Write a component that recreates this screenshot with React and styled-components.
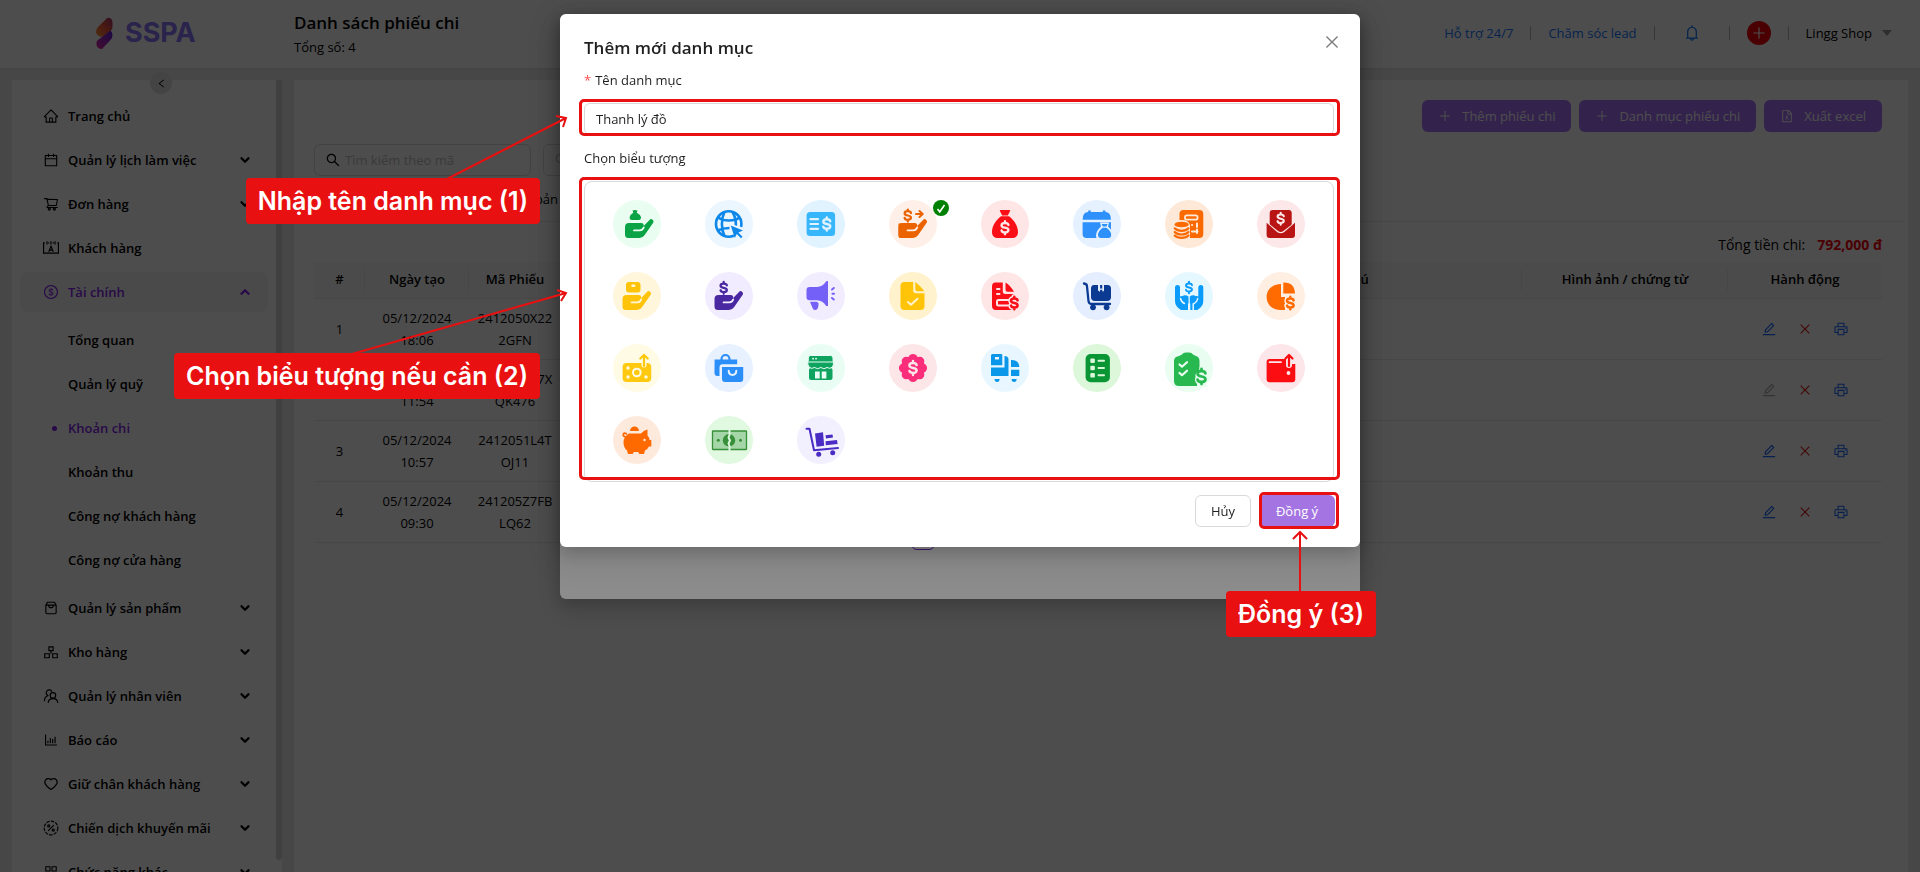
import { useState } from "react";
import styled, { createGlobalStyle } from "styled-components";
import {
  AiOutlineHome,
  AiOutlineCalendar,
  AiOutlineShoppingCart,
  AiOutlineDollar,
  AiOutlineBarChart,
  AiOutlineHeart,
  AiOutlineAppstore,
  AiOutlineBell,
  AiOutlinePlus,
  AiOutlineFileExcel,
  AiOutlineEdit,
  AiOutlineClose,
  AiOutlinePrinter,
  AiOutlineLeft,
  AiOutlineSearch,
} from "react-icons/ai";
import { FiChevronDown, FiChevronUp } from "react-icons/fi";

const GlobalStyle = createGlobalStyle`
  * { box-sizing: border-box; }
  body {
    margin: 0;
    overflow: hidden;
    background: #ebebeb;
    color: #000;
    font: 13px/22px "Open Sans", "Noto Sans", sans-serif;
  }
  button, input { font: inherit; color: inherit; }
  a { text-decoration: none; }
`;

const Page = styled.div`
  height: 100vh;
  overflow: hidden;
  display: flex;
  flex-direction: column;
`;

/* ---------- header ---------- */

const Header = styled.header`
  flex: none;
  height: 68px;
  display: flex;
  align-items: center;
  background: #fff;
  box-shadow: 0 1px 2px rgba(0, 0, 0, 0.05);
  padding: 0 28px 2px 0;
`;

const Brand = styled.div`
  width: 294px;
  padding: 0 4px 0 94px;
  display: flex;
  align-items: center;
  gap: 10px;
  color: #8b74fb;
  font: 700 27px/32px Inter, "Liberation Sans", sans-serif;
`;

const Heading = styled.div`
  flex: 1;
  margin-top: 2px;

  h1 {
    margin: 0;
    font-size: 17px;
    font-weight: 600;
    line-height: 26px;
  }
`;

const TopLinks = styled.nav`
  display: flex;
  align-items: center;

  a { color: #1677ff; }
`;

const Divider = styled.span`
  width: 1px;
  height: 14px;
  margin: 0 17px;
  background: #bbb;
`;

const IconButton = styled.button`
  display: inline-flex;
  align-items: center;
  justify-content: center;
  width: ${(props) => props.$size || 16}px;
  height: ${(props) => props.$size || 16}px;
  padding: 0;
  border: 0;
  background: ${(props) => props.$bg || "none"};
  border-radius: ${(props) => (props.$bg ? "50%" : 0)};
  color: ${(props) => props.$color || "inherit"};
  margin: 0 ${(props) => props.$gap || 0}px;
`;

const Account = styled.button`
  display: flex;
  align-items: center;
  gap: 10px;
  padding: 0;
  border: 0;
  background: none;
`;

const Caret = styled.span`
  border: 5px solid transparent;
  border-top: 6px solid #999;
  border-bottom: 0;
`;

/* ---------- sidebar ---------- */

const Body = styled.div`
  flex: 1;
  min-height: 0;
  display: flex;
  padding: 12px 12px 0;
`;

const Sidebar = styled.aside`
  position: relative;
  flex: none;
  display: flex;
  width: 270px;
  margin-right: 12px;
  background: #fff;
`;

const Collapse = styled.button`
  position: absolute;
  top: -8px;
  left: 138px;
  width: 22px;
  height: 22px;
  display: flex;
  align-items: center;
  justify-content: center;
  padding: 0;
  border: 0;
  border-radius: 50%;
  background: #e0e0e0;
`;

const Menu = styled.ul`
  flex: 1;
  list-style: none;
  margin: 0;
  padding: 16px 8px 0;
  display: flex;
  flex-direction: column;
  gap: ${(props) => props.$gap || 4}px;

  ul {
    padding: 8px 0 4px;
    flex: none;
  }
`;

const MenuItem = styled.button`
  width: 100%;
  height: 40px;
  display: flex;
  align-items: center;
  gap: 9px;
  padding: 0 16px 0 23px;
  border: 0;
  border-radius: 6px;
  background: ${(props) => (props.$open ? "#f5f5f5" : "none")};
  color: ${(props) => (props.$open ? "#851fee" : "#000")};
  font-weight: 600;
  text-align: left;
  white-space: nowrap;

  svg { flex: none; }
`;

const MenuLabel = styled.span`
  flex: 1;
`;

const SubItem = styled.a`
  display: flex;
  align-items: center;
  height: 40px;
  padding-left: 32px;
  gap: 11px;
  font-weight: 600;
  color: ${(props) => (props.$active ? "#851fee" : "#000")};

  &::before {
    content: "";
    width: 5px;
    height: 5px;
    border-radius: 50%;
    background: ${(props) => (props.$active ? "#851fee" : "none")};
  }
`;

const ScrollThumb = styled.div`
  flex: none;
  width: 6px;
  margin-bottom: 12px;
  border-radius: 0 0 3px 3px;
  background: #d4d4d4;
`;

/* ---------- content ---------- */

const Content = styled.main`
  flex: 1;
  min-width: 0;
  background: #fff;
  padding: 20px 26px 0 20px;
`;

const Actions = styled.div`
  display: flex;
  justify-content: flex-end;
  gap: 8px;
`;

const Primary = styled.button`
  height: 32px;
  display: flex;
  align-items: center;
  gap: 10px;
  padding: 0 16px;
  border: 0;
  border-radius: 6px;
  background: #a873fa;
  color: #fff;
`;

const Filters = styled.div`
  display: flex;
  gap: 12px;
  margin-top: 12px;
`;

const SearchBox = styled.label`
  display: flex;
  align-items: center;
  gap: 4px;
  width: 217px;
  height: 32px;
  padding: 0 10px;
  border: 1px solid #d9d9d9;
  border-radius: 6px;

  input {
    flex: 1;
    min-width: 0;
    border: 0;
    padding: 0;
    background: none;
    outline: none;
  }
  input::placeholder { color: #bfbfbf; }
`;

const Tabs = styled.div`
  display: flex;
  gap: 24px;
  height: 46px;
  align-items: center;
  margin: 0 -22px 0 0;
  border-bottom: 1px solid #eaeaea;

  button {
    padding: 0;
    border: 0;
    background: none;
    width: 110px;
    text-align: right;
  }
`;

const Total = styled.p`
  display: flex;
  justify-content: flex-end;
  gap: 12px;
  margin: 12px 0 6px;
  font-size: 14px;

  b { color: #f5000a; }
`;

const Table = styled.table`
  width: 100%;
  table-layout: fixed;
  border-collapse: separate;
  border-spacing: 0;
  text-align: center;

  th {
    position: relative;
    height: 37px;
    padding: 0 0 2px;
    background: #f7f7f7;
    border-bottom: 1px solid #eaeaea;
    font-weight: 600;
  }
  th:not(:last-child)::after {
    content: "";
    position: absolute;
    right: 0;
    top: 7px;
    width: 1px;
    height: 22px;
    background: #eaeaea;
  }
  td {
    height: 61px;
    padding: 8px;
    border-bottom: 1px solid #eaeaea;
    overflow-wrap: anywhere;
  }
`;

const RowActions = styled.div`
  display: flex;
  justify-content: center;
  gap: 20px;
`;

/* ---------- dialogs ---------- */

const Mask = styled.div`
  position: fixed;
  inset: 0;
  overflow: hidden;
  background: rgba(0, 0, 0, 0.45);
`;

const Dialog = styled.section`
  position: relative;
  width: 800px;
  margin: 14px auto 0;
  padding: 20px 24px;
  border-radius: 6px;
  background: #fff;
  color: #1f1f1f;
  box-shadow: 0 6px 16px rgba(0, 0, 0, 0.16), 0 9px 28px 8px rgba(0, 0, 0, 0.1);

  h2 {
    margin: 0 0 7px;
    font-size: 17px;
    line-height: 28px;
    font-weight: 600;
  }
`;

const ListDialog = styled(Dialog)`
  min-height: 585px;
  display: flex;
  flex-direction: column;
  align-items: center;
  justify-content: flex-end;
  padding-bottom: 49px;
`;

const Pager = styled.nav`
  padding-right: 74px;
`;

const PageNumber = styled.button`
  display: block;
  width: 24px;
  height: 24px;
  padding: 0;
  border: 1px solid #722ed1;
  border-radius: 6px;
  background: #fff;
`;

const Close = styled.button`
  position: absolute;
  top: 17px;
  right: 17px;
  width: 22px;
  height: 22px;
  padding: 2px;
  border: 0;
  background: none;
  color: #808080;

  svg { display: block; }
`;

const Label = styled.label`
  display: block;
  margin-bottom: 12px;

  i {
    color: #ff4d4f;
    font-style: normal;
    margin-right: 4px;
  }
`;

/* red frame drawn over the control it surrounds */
const Marked = styled.div`
  position: relative;

  &::after {
    content: "";
    position: absolute;
    inset: ${(props) => props.$inset};
    border: 3px solid #e81010;
    border-radius: 5px;
    pointer-events: none;
  }
`;

const NameInput = styled.input`
  display: block;
  width: 750px;
  height: 32px;
  margin-bottom: 12px;
  padding: 0 11px;
  border: 1px solid #d9d9d9;
  border-radius: 6px;
  outline: none;
`;

const IconGrid = styled.div`
  width: 750px;
  display: grid;
  grid-template-columns: repeat(8, 1fr);
  grid-auto-rows: 72px;
  padding: 6px 6px 5px;
  border: 1px solid #d9d9d9;
  border-radius: 8px;
`;

const IconCell = styled.button`
  position: relative;
  padding: 0;
  border: 0;
  background: none;
  display: flex;
  align-items: center;
  justify-content: center;
`;

const Tick = styled.svg`
  position: absolute;
  top: 12px;
  right: 10px;
`;

const Footer = styled.footer`
  display: flex;
  justify-content: flex-end;
  gap: 8px;
  margin-top: 13px;
  padding-right: 1px;
`;

const Cancel = styled.button`
  width: 56px;
  height: 32px;
  padding: 0;
  border: 1px solid #d9d9d9;
  border-radius: 6px;
  background: #fff;
`;

const Confirm = styled(Primary)`
  width: 76px;
  justify-content: center;
  padding: 0;
  background: #a475e2;
`;

const Arrows = styled.svg`
  position: absolute;
  top: 0;
  left: 0;
  overflow: visible;
  pointer-events: none;
`;

const Callout = styled.div`
  position: absolute;
  top: ${(props) => props.$top}px;
  right: ${(props) => props.$right}px;
  padding: 7px 12px;
  border-radius: 4px;
  background: #e81010;
  color: #fff;
  font: 600 25px/32px Inter, "Open Sans", sans-serif;
  white-space: nowrap;
`;

/* ---------- drawings ---------- */

const Line = ({ children, size = 14, sw = 1.2 }) => (
  <svg width={size} height={size} viewBox="0 0 14 14" fill="none" stroke="currentColor" strokeWidth={sw}>
    {children}
  </svg>
);

const CustomerIcon = ({ size }) => (
  <Line size={size} sw={1}>
    <path d="M1.500 2.500h-1v9h13v-9h-1M3.500 1v3M7 1v3M10.500 1v3M4.500 2.500h1M8.500 2.500h1M5 10.200l2-4.700 2 4.700M5.600 8.800h2.800" />
  </Line>
);

const ProductIcon = ({ size }) => (
  <Line size={size} sw={1}>
    <path d="M2.500 4.500 4 2h6l1.500 2.500v6.500a1 1 0 0 1-1 1h-7a1 1 0 0 1-1-1zM2.500 4.500h9M5 4.500c0 3 4 3 4 0" />
  </Line>
);

const StockIcon = ({ size }) => (
  <Line size={size} sw={1}>
    <path d="M5.200 2.500h3.600v3.300H5.200zM1.500 8.500h4V12h-4zM8.500 8.500h4V12h-4zM7 6v2.500" />
  </Line>
);

const StaffIcon = ({ size }) => (
  <Line size={size} sw={1}>
    <circle cx="8.700" cy="6.500" r="2.400" />
    <path d="M4.500 13c.3-5 8.200-5 8.500 0M7.800 3.200A2.600 2.600 0 1 0 4.200 6.500C2.200 7.500 1.200 9 1.200 11.500" />
  </Line>
);

const PromoIcon = ({ size }) => (
  <Line size={size} sw={1}>
    <circle cx="7" cy="7" r="6" strokeDasharray="3 1" />
    <path d="m4.500 9.500 5-5" />
    <circle cx="5" cy="5.200" r=".9" />
    <circle cx="9" cy="8.800" r=".9" />
  </Line>
);

const Logo = () => (
  <svg width="21" height="34" viewBox="0 0 21 34">
    <defs>
      <linearGradient id="flame" x1="0" y1="1" x2="1" y2="0">
        <stop offset="0" stopColor="#ff9a2e" />
        <stop offset=".5" stopColor="#f5553c" />
        <stop offset="1" stopColor="#a03070" />
      </linearGradient>
      <linearGradient id="violet" x1="0" y1="1" x2="1" y2="0">
        <stop offset="0" stopColor="#e02aa0" />
        <stop offset="1" stopColor="#5a1ee0" />
      </linearGradient>
    </defs>
    <path d="M4 11 13.500 1.700q4.500-.2 5 4.300v5q0 2-1.500 3.500L8 21q-5.500-1-6-5 0-3 2-5z" fill="url(#flame)" />
    <path d="m8 21 8.500-6.500q2 1.500 2 4.500t-2 5L8 33q-4.500-.2-5.500-4-.5-4 1.500-5z" fill="url(#violet)" />
  </svg>
);

const Dollar = ({ x, y, s = 1, w = 2, c }) => (
  <path
    transform={`translate(${x} ${y}) scale(${s})`}
    fill="none"
    stroke={c}
    strokeWidth={w}
    strokeLinecap="round"
    d="M3.300-2.600C3-4 1.700-4.500 0-4.500c-2 0-3.300.9-3.300 2.300C-3.300-.7-1.700-.3 0 0s3.300.7 3.300 2.200C3.300 3.600 2 4.500 0 4.500c-1.700 0-3-.5-3.300-1.900M0-6.300v1.800M0 4.500v1.800"
  />
);

const Hand = ({ c, bg, x = 0 }) => (
  <g transform={`translate(${x} 0)`}>
    <path
      fill={c}
      d="M9.500 27a4 4 0 0 1 4-4h12a2.700 2.700 0 0 1 2.700 3l5.800-6a2.300 2.300 0 0 1 3.700 2.700L29 35.300A6 6 0 0 1 24 38H13a3.500 3.500 0 0 1-3.500-3.500z"
    />
    <path d="M18.500 30.400h5.800c2 0 3.200-1 4-3" fill="none" stroke={bg} strokeWidth="1.700" strokeLinecap="round" />
  </g>
);

const cut = (bg, w = 1.8) => ({ fill: "none", stroke: bg, strokeWidth: w, strokeLinecap: "round", strokeLinejoin: "round" });

// every entry: circle colour, drawing colour, drawing on a 48x48 board
const categoryIcons = [
  ["Trả tiền", "#e9fdf0", "#0aa345", (c, bg) => (
    <>
      <path fill={c} d="M19.500 10.500q2.500-1.200 5 0l-.8 2.300q4.300 2.200 4.300 5 0 2.200-2.200 2.200h-7q-2.200 0-2.200-2.200 0-2.800 3.700-5z" />
      <Hand c={c} bg={bg} x={2.500} />
    </>
  )],
  ["Trực tuyến", "#ebf6ff", "#0d87e9", (c, bg) => (
    <>
      <g fill="none" stroke={c} strokeWidth="2.600">
        <circle cx="23.700" cy="24" r="12.700" />
        <path d="M19.500 12c-3.500 7-3.500 17 0 24M27.500 12c3 5 3.600 9 3.400 14M13 17.500c4 2.500 6.500 3 11 3s7.500-.5 10.500-3M12.500 30.500c4-2 7-2.500 12-2.500" />
      </g>
      <path d="M23.500 23.500 40 28v12h-9z" fill={bg} />
      <path d="m25.700 25.500 12.300 5-4.600 2 4.100 4.200-1.500 1.500-4.200-4.200-2 4z" fill={c} />
    </>
  )],
  ["Thẻ", "#e0f3ff", "#38b6fb", (c, bg) => (
    <>
      <rect x="9.600" y="12" width="28.500" height="24" rx="3.500" fill={c} />
      <path d="M13.500 19.200h7.500M13.500 24h7.500M13.500 28.800h7.500" {...cut(bg, 2.200)} />
      <Dollar x={29.800} y={24} s={1.050} w={2.300} c={bg} />
    </>
  )],
  ["Chi tiền", "#fef0e8", "#eb6200", (c, bg) => (
    <>
      <Dollar x={18.800} y={15.500} s={0.950} w={2.400} c={c} />
      <path d="M27 14h6M30.500 11l3.200 3-3.200 3" {...cut(c, 2)} />
      <path fill={c} d="M9.500 23.500h14V38h-12q-2 0-2-2z" />
      <Hand c={c} bg={bg} />
    </>
  )],
  ["Túi tiền", "#fee6e7", "#fb0f16", (c, bg) => (
    <>
      <path fill={c} d="M19.500 10h9q1 0 .6 1l-2.300 4.500h-5.600L18.900 11q-.4-1 .6-1zM20 16.300h8c5 3.700 9 9.500 9 15.700 0 4-2.500 6-6 6H17c-3.500 0-6-2-6-6 0-6.200 4-12 9-15.700z" />
      <Dollar x={24} y={27.700} s={1.050} w={2.200} c={bg} />
    </>
  )],
  ["Lịch chi", "#e6f1ff", "#2e90fa", (c, bg) => (
    <>
      <path fill={c} d="M9.600 19.800q0-7.500 5.600-7.800V10.600h2.600V12h12V10.600h2.600V12q5.600.3 5.600 7.800zM9.600 22.200H38V38H13.500q-3.900 0-3.900-4z" />
      <path d="M27 22.500h9l-1 4q5 4.500 5 9 0 4.500-4 4.500h-9q-4 0-4-4.500t5-9z" fill={bg} />
      <path d="M28.600 24h6l-1.200 2.500h-3.600zM29.700 27.700h3.800q4.700 3.600 4.700 7 0 3.300-3 3.300H28q-3 0-3-3.300 0-3.400 4.700-7z" fill={c} />
    </>
  )],
  ["Kế toán", "#fee9d9", "#fb6a00", (c, bg) => (
    <>
      <rect x="14.500" y="10" width="23.800" height="28" rx="4" fill={c} />
      <rect x="20" y="15.300" width="12.500" height="4.400" rx="1.800" {...cut(bg)} />
      <path d="M27 25h.1M32 23.500v3.500M27 31.500h5.500M32 29.500v3.500" {...cut(bg, 2)} />
      <path d="M8 25q1.500-5 8.500-5t8.500 5v15H8z" fill={bg} />
      <ellipse cx="16.600" cy="24.500" rx="7.200" ry="2.800" fill={c} />
      <path d="M9.700 28.300q2.300 2.500 6.900 2.500t6.900-2.500M9.700 32q2.300 2.500 6.900 2.500t6.900-2.500M9.700 35.500q2.300 2.300 6.900 2.300t6.900-2.300" {...cut(c, 2.200)} />
    </>
  )],
  ["Thư", "#fde8e9", "#b81414", (c, bg) => (
    <>
      <path fill={c} d="M12.700 13q0-3 3-3h16q3 0 3 3v13l-11 8-11-8z" />
      <path d="M8 20.500 21 31q2.700 1.800 5.400 0L40 20.500V25L26 35h-5L8 25z" fill={bg} />
      <path fill={c} d="m9.600 22.800 10.800 9.400q3.300 2.200 6.600 0L38 22.800V35q0 3-3 3H12.600q-3 0-3-3z" />
      <Dollar x={23.700} y={18.700} s={0.950} w={2.200} c={bg} />
    </>
  )],
  ["Nhận tiền mặt", "#fff6db", "#ffc40a", (c, bg) => (
    <>
      <rect x="13" y="10" width="14.500" height="10.500" rx="3" fill={c} />
      <rect x="18.300" y="12.500" width="4" height="2.500" rx="1" fill={bg} />
      <Hand c={c} bg={bg} />
    </>
  )],
  ["Cho vay", "#f1ecff", "#4a28a2", (c, bg) => (
    <>
      <Dollar x={18.700} y={15.800} s={0.950} w={2.400} c={c} />
      <Hand c={c} bg={bg} />
    </>
  )],
  ["Quảng cáo", "#f1edff", "#7560f7", (c) => (
    <>
      <path fill={c} d="M12.500 15h7.500q6-.6 8.600-5 .8-1.200 2.400-.8V34q-1.800.4-2.400-.8-2.600-4.500-8.600-5h-7.500q-3 0-3-3V18q0-3 3-3zM13 29.800h6.500q2.500.5 2 3-.2 5.200-3.500 5.200-2 0-2.700-2.500z" />
      <path d="m35 17.500 1.800-1.500M35.500 21.700h1.500M35 26l1.800 1.500" {...cut(c, 2)} />
    </>
  )],
  ["Chứng từ", "#fff2cc", "#ffc408", (c, bg) => (
    <>
      <path fill={c} d="M15.500 10h8.700v8.500q0 2.800 2.800 2.800h8.500V34q0 4-4 4h-16q-4 0-4-4V14q0-4 4-4zM26.300 10q3.500 2.500 9.200 9.200h-7.200q-2 0-2-2z" />
      <path d="m19 30 3 2.700 6.500-6" {...cut(bg, 2)} />
    </>
  )],
  ["Hóa đơn", "#fee6e7", "#fb0f16", (c, bg) => (
    <>
      <path fill={c} d="M14.500 10.500h7.300v9q0 2.500 2.500 2.500H33v16H15q-4 0-4-4V14.500q0-4 3.500-4zM24.500 10.500Q29 13 33 19.800h-6.500q-2 0-2-2z" />
      <path d="M16 17h2.500M16 22h2.500" {...cut(bg, 2)} />
      <path d="M28 28H17.500q-1.500 0-1.500 1.800V32q0 1.500 1.500 1.500H27" {...cut(bg, 2)} />
      <Dollar x={33.300} y={31} s={1} w={5.500} c={bg} />
      <Dollar x={33.300} y={31} s={1} w={2.500} c={c} />
    </>
  )],
  ["Xe hàng", "#e4eeff", "#0b3a93", (c, bg) => (
    <>
      <path d="M11 11.500q3 .3 3 3l1.500 14.500q.3 3 3 3H37" {...cut(c, 2.300)} />
      <path fill={c} d="M21 13h4v6l3-1.500 3 1.500v-6h3.500q3.500 0 3.500 3.500V25q0 4-4 4H22q-4 0-4-4v-8.500q0-3.500 3-3.500z" />
      <path fill={c} d="M26.500 13h3v4l-1.500-.8-1.500.8z" />
      <circle cx="20" cy="35.300" r="2.900" fill={c} />
      <circle cx="33.600" cy="35.300" r="2.900" fill={c} />
      <path d="M26.500 13v6M30 13v6" {...cut(bg, 1.200)} />
    </>
  )],
  ["Hỗ trợ", "#e6f8ff", "#0a9bfc", (c, bg) => (
    <>
      <Dollar x={24} y={15.500} s={0.900} w={2.200} c={c} />
      <path fill={c} d="M10 15.500a2.500 2.500 0 0 1 5 0v9q2.500-1.500 5 1l3 3.500V38H16q-6-3.500-6-9zM38.300 15.500a2.500 2.500 0 0 0-5 0v9q-2.500-1.500-5 1L25.300 29v9h7q6-3.500 6-9z" />
      <path fill={c} d="M17 24.500q3-2.500 6.500 0v7h-4zM31.200 24.500q-3-2.500-6.400 0v7h4z" />
      <path d="M15.500 26.500q1 3.800 4 5M32.700 26.500q-.5 3.500-4.500 5.500V38" {...cut(bg, 1.500)} />
    </>
  )],
  ["Cổ phần", "#ffefe3", "#ff6b00", (c, bg) => (
    <>
      <path fill={c} d="M24 12v13h4v13h-5c-8 0-13.400-6-13.400-13S15 12 24 12zM26.300 10.500Q37.500 10 38 21.500H26.300z" />
      <Dollar x={33.300} y={31} s={1} w={5.500} c={bg} />
      <Dollar x={33.300} y={31} s={1} w={2.500} c={c} />
    </>
  )],
  ["Rút tiền", "#fffbe5", "#ffc90f", (c, bg) => (
    <>
      <rect x="9.600" y="19" width="28.600" height="19" rx="4" fill={c} />
      <circle cx="23.800" cy="28.500" r="3.800" {...cut(bg, 2)} />
      <g fill={bg}>
        <circle cx="15" cy="24" r="1.700" />
        <circle cx="15" cy="33" r="1.700" />
        <circle cx="33" cy="33" r="1.700" />
      </g>
      <path d="M31 12v9" {...cut(bg, 5)} />
      <path d="M31 11.500V22M27.300 14.500 31 11l3.700 3.500" {...cut(c, 2.300)} />
    </>
  )],
  ["Mua sắm", "#e7f1ff", "#2c8ef8", (c, bg) => (
    <>
      <path d="M16.500 16v-1a4 4 0 0 1 8 0v1" {...cut(c, 2.200)} />
      <path fill={c} d="M9.600 15.500h22.600v4.700H17.500q-3 0-3 3V32h-2q-3 0-3-3z" />
      <path fill={c} d="M17 23h21.200v12q0 3-3 3H20q-3 0-3-3z" />
      <path d="M23.700 26.800c0 5.500 7.600 5.500 7.600 0" {...cut(bg, 2)} />
    </>
  )],
  ["Cửa hàng", "#e9fdf5", "#0fa360", (c, bg) => (
    <>
      <rect x="12" y="24" width="23.500" height="12" rx="2" fill={c} />
      <path fill={c} stroke={bg} strokeWidth="1" d="M13.500 11.500h20q2.500 0 2.500 2.500v2.500q1.300 4-.5 6.500-2.500 2.500-5.500.5-3 2.500-6.200 0-3.300 2.500-6.300 0-3 2-5.500-.5-2-2.500-.7-6.500V14q0-2.500 2.200-2.500z" />
      <path d="M12 18h23.500" {...cut(bg, 1)} />
      <path d="M16 14.700h.1M19 14.700h.1" {...cut(bg, 1.700)} />
      <path d="M18 27.500h4.700V34.500H18zM24.700 27.500h4.700V34.500h-4.700z" fill={bg} />
    </>
  )],
  ["Khuyến mãi", "#fde6e8", "#fb2e7c", (c, bg) => (
    <>
      <circle cx="24" cy="24" r="12" fill={c} />
      {[0, 45, 90, 135, 180, 225, 270, 315].map((a) => (
        <circle key={a} cx="24" cy="14.500" r="4.600" fill={c} transform={`rotate(${a} 24 24)`} />
      ))}
      <Dollar x={24} y={24} s={1.100} w={2.200} c={bg} />
    </>
  )],
  ["Vận chuyển", "#e8f7ff", "#0a97ea", (c, bg) => (
    <>
      <path fill={c} d="M11.500 10H20q1.300 0 1.300 1.300v10H10V11.500Q10 10 11.500 10zM10 23.600h13.500V12q4 0 4 3.500V32H10zM30 16q8-.5 8.300 7H30zM30 25.800h8.300V32H30zM13.500 35h5.200q-.2 3-2.600 3t-2.600-3zM30.500 35h5.200q-.2 3-2.600 3t-2.600-3z" />
      <rect x="14" y="13" width="4" height="2.500" fill={bg} />
    </>
  )],
  ["Danh sách", "#dcf7d9", "#0a9635", (c, bg) => (
    <>
      <rect x="12.600" y="10" width="24.300" height="28.300" rx="5" fill={c} />
      {[16.700, 24, 31.300].map((y) => (
        <g key={y}>
          <rect x="17.300" y={y - 2.300} width="4.600" height="4.600" rx="1.200" fill={bg} />
          <path d={`M25.500 ${y}h5.500`} {...cut(bg, 2)} />
        </g>
      ))}
    </>
  )],
  ["Kiểm kê", "#e9fdf0", "#27b850", (c, bg) => (
    <>
      <path fill={c} d="M17 10.500q1-2 4-2h3q3 0 4 2l3 1.500q3.500 1 3.500 5V42H14q-5 0-5-5V17q0-4 4.500-4.700z" />
      <path d="m14.500 20.500 2.500 2.200 5-4.500M14.500 29l2.500 2.200 5-4.500" {...cut(bg, 2.200)} />
      <path d="M34.500 23v4q-5 1.500-4 6-1.500 4 1.500 7v3h10V23z" fill={bg} />
      <Dollar x={36.500} y={32.500} s={1.200} w={2.300} c={c} />
    </>
  )],
  ["Ví", "#fde6ea", "#fb0d12", (c, bg) => (
    <>
      <path fill={c} d="M12.500 15H29v5h9.300v15.300q0 3-3 3H12.600q-3 0-3-3V18q0-3 2.900-3z" />
      <path d="M12.500 18.200H24" {...cut(bg, 1.700)} />
      <circle cx="31.500" cy="29" r="1.900" fill={bg} />
      <path d="M32 14v7" {...cut(bg, 6)} />
      <path d="M32 11.500V22M28.500 14.500 32 11l3.500 3.500" {...cut(c, 2.200)} />
    </>
  )],
  ["Tiết kiệm", "#fee9dd", "#ff6a00", (c, bg) => (
    <>
      <path fill={c} d="M17 15a4.500 4.500 0 0 1 9 0zM16 17.500h12q3-3.500 6.500-4v6q2 2 2 4.500h1.800v6.500H36q-1.500 3-4 4L31 38h-4.500L25 36h-4l-1.500 2H15l-1-3.500q-3.500-3-3.500-8 0-6 5.500-9z" />
      <path d="M13 21q-3.500-.5-2.500-3 1-1.500 2.800-.3" {...cut(c, 1.900)} />
      <circle cx="31.500" cy="24" r="1.200" fill={bg} />
    </>
  )],
  ["Tiền mặt", "#e1f8e1", "#379039", (c, bg) => (
    <>
      <rect x="7.500" y="15" width="34" height="18.500" rx=".5" fill="#a5d6a7" stroke={c} strokeWidth="1.300" />
      <circle cx="24" cy="24.300" r="6.200" fill={c} />
      <circle cx="13.300" cy="24.300" r="1.500" fill={c} />
      <circle cx="35.500" cy="24.300" r="1.500" fill={c} />
      <path d="M24.500 14v5l-1 2.500 1.500 3-1.500 3 1 2.500v5" {...cut(bg, 2)} />
    </>
  )],
  ["Nhập hàng", "#f2effe", "#4a2bc4", (c) => (
    <>
      <path d="M9.500 12.700h3l4.500 21.500L41 32" {...cut(c, 2)} />
      <path fill={c} d="m18 17.500 8-1.300 1.200 13.600-7.600 1zM28.500 19.300l7-.8.500 3-7 .9zM28.500 25.200l11.500-1.300.6 4-11.800 1.300z" />
      <circle cx="21.700" cy="38.200" r="2.500" fill={c} />
      <circle cx="35.700" cy="36.700" r="2.500" fill={c} />
    </>
  )],
];

/* ---------- data ---------- */

const menu = [
  [AiOutlineHome, "Trang chủ", false],
  [AiOutlineCalendar, "Quản lý lịch làm việc", true],
  [AiOutlineShoppingCart, "Đơn hàng", true],
  [CustomerIcon, "Khách hàng", false],
  [AiOutlineDollar, "Tài chính", true, ["Tổng quan", "Quản lý quỹ", "Khoản chi", "Khoản thu", "Công nợ khách hàng", "Công nợ cửa hàng"]],
  [ProductIcon, "Quản lý sản phẩm", true],
  [StockIcon, "Kho hàng", true],
  [StaffIcon, "Quản lý nhân viên", true],
  [AiOutlineBarChart, "Báo cáo", true],
  [AiOutlineHeart, "Giữ chân khách hàng", true],
  [PromoIcon, "Chiến dịch khuyến mãi", true],
  [AiOutlineAppstore, "Chức năng khác", true],
];

const rows = [
  ["1", "05/12/2024 18:06", "2412050X222GFN", true],
  ["2", "05/12/2024 11:54", "241205197XQK476", false],
  ["3", "05/12/2024 10:57", "2412051L4TOJ11", true],
  ["4", "05/12/2024 09:30", "241205Z7FBLQ62", true],
];

function SideMenu() {
  return (
    <Sidebar>
      <Collapse aria-label="Thu gọn"><AiOutlineLeft size={11} /></Collapse>
      <Menu>
        {menu.map(([Icon, label, expandable, children]) => (
          <li key={label}>
            <MenuItem $open={!!children}>
              <Icon size={16} />
              <MenuLabel>{label}</MenuLabel>
              {expandable && (children
                ? <FiChevronUp size={14} strokeWidth={4} />
                : <FiChevronDown size={14} strokeWidth={4} />)}
            </MenuItem>
            {children && (
              <Menu as="ul">
                {children.map((child) => (
                  <li key={child}>
                    <SubItem href="#" $active={child === "Khoản chi"}>{child}</SubItem>
                  </li>
                ))}
              </Menu>
            )}
          </li>
        ))}
      </Menu>
      <ScrollThumb />
    </Sidebar>
  );
}

function ExpenseTable() {
  return (
    <Table>
      <colgroup>
        <col style={{ width: 51 }} />
        <col style={{ width: 104 }} />
        <col style={{ width: 92 }} />
        <col />
        <col style={{ width: 354 }} />
        <col style={{ width: 206 }} />
        <col style={{ width: 154 }} />
      </colgroup>
      <thead>
        <tr>
          <th>#</th>
          <th>Ngày tạo</th>
          <th>Mã Phiếu</th>
          <th>Số tiền</th>
          <th>Ghi chú</th>
          <th>Hình ảnh / chứng từ</th>
          <th>Hành động</th>
        </tr>
      </thead>
      <tbody>
        {rows.map(([no, date, code, editable]) => (
          <tr key={no}>
            <td>{no}</td>
            <td>{date}</td>
            <td>{code}</td>
            <td />
            <td />
            <td />
            <td>
              <RowActions>
                <IconButton aria-label="Sửa" $color={editable ? "#1668ff" : "#aaa"}><AiOutlineEdit size={16} /></IconButton>
                <IconButton aria-label="Xóa" $color="#e01515"><AiOutlineClose size={14} /></IconButton>
                <IconButton aria-label="In" $color="#1668ff"><AiOutlinePrinter size={16} /></IconButton>
              </RowActions>
            </td>
          </tr>
        ))}
      </tbody>
    </Table>
  );
}

function CategoryDialog() {
  const [name, setName] = useState("Thanh lý đồ");
  const [selected, setSelected] = useState("Chi tiền");

  return (
    <Dialog role="dialog" aria-labelledby="category-title">
      <h2 id="category-title">Thêm mới danh mục</h2>
      <Close aria-label="Đóng"><AiOutlineClose size={18} /></Close>

      <Label htmlFor="category-name"><i>*</i>Tên danh mục</Label>
      <Marked $inset="-4px -4px -1px -5px">
        <NameInput id="category-name" value={name} onChange={(e) => setName(e.target.value)} />
      </Marked>

      <Label as="div">Chọn biểu tượng</Label>
      <Marked $inset="-4px -4px 2px -5px">
        <IconGrid>
          {categoryIcons.map(([label, bg, color, draw]) => (
            <IconCell key={label} aria-label={label} onClick={() => setSelected(label)}>
              <svg width="48" height="48" viewBox="0 0 48 48">
                <circle cx="24" cy="24" r="24" fill={bg} />
                {draw(color, bg)}
              </svg>
              {label === selected && (
                <Tick width="16" height="16" viewBox="0 0 16 16">
                  <circle cx="8" cy="8" r="8" fill="#008000" />
                  <path d="m4.500 9 2.300 2.800L11.500 5" fill="none" stroke="#fff" strokeWidth="1.600" />
                </Tick>
              )}
            </IconCell>
          ))}
        </IconGrid>
      </Marked>

      <Footer>
        <Cancel>Hủy</Cancel>
        <Marked $inset="-3px -4px -2px 0">
          <Confirm>Đồng ý</Confirm>
        </Marked>
      </Footer>

      <Arrows width="1" height="1" fill="none" stroke="#e81010" strokeWidth="2">
        <path d="M-113 165 6 104M-4 102l10 2-3 9" />
        <path d="M-208 340 6 279M-3 276l9 3-5 8" />
        <path d="M740 578v-60M733 525l7-7 7 7" />
      </Arrows>
      <Callout $top={164} $right={820}>Nhập tên danh mục (1)</Callout>
      <Callout $top={339} $right={820}>Chọn biểu tượng nếu cần (2)</Callout>
      <Callout $top={577} $right={-16}>Đồng ý (3)</Callout>
    </Dialog>
  );
}

export default function App() {
  return (
    <>
      <GlobalStyle />
      <Page>
        <Header>
          <Brand><Logo />SSPA</Brand>
          <Heading>
            <h1>Danh sách phiếu chi</h1>
            <div>Tổng số: 4</div>
          </Heading>
          <TopLinks>
            <a href="#">Hỗ trợ 24/7</a>
            <Divider />
            <a href="#">Chăm sóc lead</a>
            <Divider />
            <IconButton aria-label="Thông báo" $size={18} $gap={11} $color="#1677ff"><AiOutlineBell size={18} /></IconButton>
            <Divider />
            <IconButton aria-label="Thêm" $size={24} $bg="#f5000a" $color="#fff"><AiOutlinePlus size={16} /></IconButton>
            <Divider />
            <Account>Lingg Shop <Caret /></Account>
          </TopLinks>
        </Header>
        <Body>
          <SideMenu />
          <Content>
            <Actions>
              <Primary><AiOutlinePlus size={14} />Thêm phiếu chi</Primary>
              <Primary><AiOutlinePlus size={14} />Danh mục phiếu chi</Primary>
              <Primary><AiOutlineFileExcel size={14} />Xuất excel</Primary>
            </Actions>
            <Filters>
              <SearchBox>
                <AiOutlineSearch size={16} />
                <input aria-label="Tìm kiếm" placeholder="Tìm kiếm theo mã" />
              </SearchBox>
              <SearchBox>
                <AiOutlineSearch size={16} color="#bfbfbf" />
                <input aria-label="Danh mục" />
              </SearchBox>
            </Filters>
            <Tabs>
              <button>Ngày tạo</button>
              <button>Tài khoản</button>
            </Tabs>
            <Total>Tổng tiền chi: <b>792,000 đ</b></Total>
            <ExpenseTable />
          </Content>
        </Body>
      </Page>
      <Mask>
        <ListDialog>
          <Pager>
            <PageNumber>1</PageNumber>
          </Pager>
        </ListDialog>
      </Mask>
      <Mask>
        <CategoryDialog />
      </Mask>
    </>
  );
}
